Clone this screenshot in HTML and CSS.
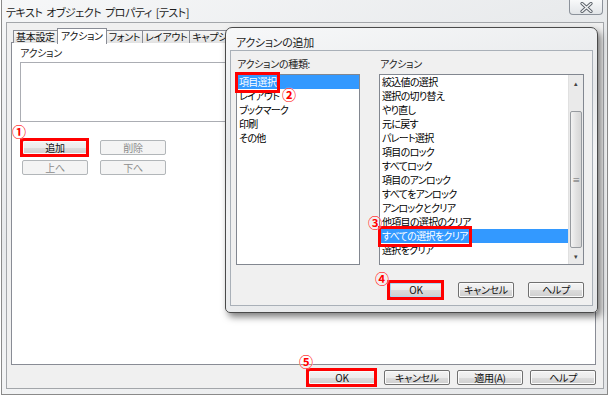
FILE: index.html
```html
<!DOCTYPE html>
<html lang="ja">
<head>
  <meta charset="UTF-8" />
  <title>テキスト オブジェクト プロパティ</title>
  <link rel="stylesheet" href="styles.css">
</head>
<body>

  <div class="window">
    <!-- タイトルバー -->
    <div class="titlebar">
      <span class="title">テキスト オブジェクト プロパティ [テスト]</span>
      <span class="close">
        <svg width="13" height="11" viewBox="0 0 13 11">
          <path d="M2 1.5 L11 9.5 M11 1.5 L2 9.5" stroke="#5a6068" stroke-width="3.2" stroke-linecap="round"/>
          <path d="M2 1.5 L11 9.5 M11 1.5 L2 9.5" stroke="#f4f5f6" stroke-width="1.4" stroke-linecap="round"/>
        </svg>
      </span>
    </div>

    <div class="client">
      <div class="tabs">
        <span class="tab">基本設定</span>
        <span class="tab active">アクション</span>
        <span class="tab">フォント</span>
        <span class="tab">レイアウト</span>
        <span class="tab">キャプション</span>
      </div>

      <div class="panel">
        <div class="label">アクション</div>
        <div class="listbox"></div>
        <div class="btn-grid">
          <button class="btn mark">追加</button>
          <button class="btn" disabled>削除</button>
          <button class="btn" disabled>上へ</button>
          <button class="btn" disabled>下へ</button>
        </div>
      </div>

      <div class="footer">
        <button class="btn mark">OK</button>
        <button class="btn">キャンセル</button>
        <button class="btn">適用(A)</button>
        <button class="btn">ヘルプ</button>
      </div>
    </div>

    <!-- アクションの追加 ダイアログ -->
    <div class="dialog">
      <div class="dlg-title">アクションの追加</div>
      <div class="dlg-client">
        <div class="dlg-cols">
          <div class="col">
            <div class="label">アクションの種類:</div>
            <div class="list kinds">
              <div class="item selected"><span class="mark-text">項目選択</span></div>
              <div class="item">レイアウト</div>
              <div class="item">ブックマーク</div>
              <div class="item">印刷</div>
              <div class="item">その他</div>
            </div>
          </div>
          <div class="col">
            <div class="label">アクション</div>
            <div class="list actions">
              <div class="rows">
                <div class="item">絞込値の選択</div>
                <div class="item">選択の切り替え</div>
                <div class="item">やり直し</div>
                <div class="item">元に戻す</div>
                <div class="item">パレート選択</div>
                <div class="item">項目のロック</div>
                <div class="item">すべてロック</div>
                <div class="item">項目のアンロック</div>
                <div class="item">すべてをアンロック</div>
                <div class="item">アンロックとクリア</div>
                <div class="item">他項目の選択のクリア</div>
                <div class="item selected"><span class="mark-text">すべての選択をクリア</span></div>
                <div class="item">選択をクリア</div>
              </div>
              <div class="scrollbar">
                <span class="arrow">▴</span>
                <span class="thumb"><span class="grip">≡</span></span>
                <span class="arrow">▾</span>
              </div>
            </div>
          </div>
        </div>
        <div class="dlg-buttons">
          <button class="btn default mark">OK</button>
          <button class="btn">キャンセル</button>
          <button class="btn">ヘルプ</button>
        </div>
      </div>
    </div>

    <!-- 手順番号 -->
    <span class="num n1">①</span>
    <span class="num n2">②</span>
    <span class="num n3">③</span>
    <span class="num n4">④</span>
    <span class="num n5">⑤</span>
  </div>

</body>
</html>
```

FILE: styles.css
```css
body {
  margin: 0;
  background: #ffffff;
  font-family: "Noto Sans CJK JP", "Noto Sans", sans-serif;
  font-size: 10px;
  font-feature-settings: "palt";
  letter-spacing: -0.3px;
  color: #000;
}

button {
  font-family: inherit;
  font-size: 10px;
  font-feature-settings: "palt";
  letter-spacing: -0.3px;
  padding: 0;
  margin: 0;
}

.window {
  position: relative;
  width: 605px;
  height: 394px;
  margin-left: 1px;
  border: 1px solid #8a8a8a;
  border-top: none;
  background: linear-gradient(160deg, #f6f7f8 0%, #e7e9eb 40%, #f3f4f5 60%, #e4e6e8 100%);
  display: flex;
  flex-direction: column;
}

.titlebar {
  height: 22px;
  display: flex;
  justify-content: space-between;
  align-items: flex-start;
}

.title {
  font-size: 11px;
  letter-spacing: -0.5px;
  word-spacing: 2px;
  color: #1e1e1e;
  padding: 5px 0 0 4px;
  line-height: 14px;
}

.close {
  width: 34px;
  height: 15px;
  margin-right: 4px;
  border: 1px solid #8c929b;
  border-top: none;
  border-radius: 0 0 4px 4px;
  background: linear-gradient(#f8f9fa, #e2e5e8);
  display: flex;
  justify-content: center;
  align-items: center;
  box-sizing: border-box;
}

.client {
  flex: 1;
  margin: 0 3px 5px 4px;
  border: 1px solid #a3a6aa;
  background: #f0f0f0;
  padding: 5px 7px 0 4px;
  display: flex;
  flex-direction: column;
}

/* タブ */
.tabs {
  display: flex;
  height: 14px;
  padding-left: 3px;
  position: relative;
  z-index: 1;
}

.tab {
  margin-top: 2px;
  height: 12px;
  padding: 0 2px;
  line-height: 12px;
  border: 1px solid #898c95;
  border-bottom: none;
  margin-left: -1px;
  background: linear-gradient(#f6f6f6, #e2e2e2);
  color: #111;
}

.tab.active {
  margin-top: 0;
  height: 15px;
  line-height: 14px;
  background: #ffffff;
  padding: 0 3px;
}

.panel {
  height: 318px;
  background: #ffffff;
  border: 1px solid #898c95;
  padding: 3px 8px 0 8px;
}

.panel .label {
  height: 16px;
  line-height: 14px;
  color: #222;
}

.listbox {
  height: 58px;
  border: 1px solid #abadb3;
  background: #fff;
}

.btn-grid {
  display: grid;
  grid-template-columns: 66px 66px;
  grid-auto-rows: 15px;
  column-gap: 12px;
  row-gap: 5px;
  margin: 18px 0 0 2px;
}

.btn {
  position: relative;
  height: 15px;
  border: 1px solid #707070;
  border-radius: 2px;
  background: linear-gradient(#f3f3f3 0%, #ebebeb 50%, #dcdcdc 51%, #cfcfcf 100%);
  box-shadow: inset 0 0 0 1px #fbfbfb;
  color: #111;
  line-height: 12px;
}

.btn:disabled {
  border-color: #b2b6b9;
  background: #f4f4f4;
  color: #8c8c8c;
  box-shadow: none;
}

.btn.default {
  border-color: #3c7fb1;
  box-shadow: inset 0 0 0 1px #a8d8f4;
}

/* 赤枠 */
.mark::after,
.mark-text::after {
  content: "";
  position: absolute;
  inset: -3px -2px -3px -3px;
  border: 3px solid #ff0000;
  pointer-events: none;
}

.footer {
  display: flex;
  justify-content: flex-end;
  gap: 7px;
  padding: 5px 0 0 0;
}

.footer .btn {
  width: 66px;
}

.footer .btn:first-child {
  width: 68px;
  margin-right: 1px;
}

/* ダイアログ */
.dialog {
  position: absolute;
  z-index: 2;
  left: 223px;
  top: 27px;
  width: 373px;
  height: 286px;
  box-sizing: border-box;
  border: 1px solid #4a4a4a;
  border-radius: 7px 7px 5px 5px;
  background: linear-gradient(170deg, #f7f8f9 0%, #e6e8ea 35%, #f2f3f4 55%, #e3e5e7 100%);
  box-shadow: 3px 4px 7px rgba(0, 0, 0, 0.5);
  padding: 0 4px 6px 4px;
  display: flex;
  flex-direction: column;
}

.dlg-title {
  height: 22px;
  line-height: 28px;
  padding-left: 6px;
  font-size: 11px;
  color: #1e1e1e;
}

.dlg-client {
  flex: 1;
  border: 1px solid #a9b0b8;
  background: #f0f0f0;
  padding: 4px 7px 0 5px;
}

.dlg-cols {
  display: grid;
  grid-template-columns: 124px 205px;
  column-gap: 19px;
}

.dlg-client .label {
  height: 17px;
  line-height: 17px;
  padding-left: 1px;
  margin-bottom: 2px;
  color: #222;
}

.list {
  height: 191px;
  box-sizing: border-box;
  border: 1px solid #828790;
  background: #ffffff;
}

.item {
  height: 14px;
  line-height: 14px;
  padding-left: 2px;
  letter-spacing: -0.7px;
  white-space: nowrap;
}

.item.selected {
  background: #3399ff;
  color: #ffffff;
}

.mark-text {
  position: relative;
  padding-right: 2px;
}

.mark-text::after {
  inset: -2px -2px -4px -4px;
}

.actions {
  display: flex;
}

.actions .rows {
  flex: 1;
}

.scrollbar {
  width: 14px;
  background: #eaeaea;
  border-left: 1px solid #e0e0e0;
  display: flex;
  flex-direction: column;
  align-items: center;
}

.arrow {
  height: 16px;
  font-size: 7px;
  line-height: 16px;
  color: #444;
}

.scrollbar .arrow:first-child {
  margin-bottom: 20px;
}

.thumb {
  width: 12px;
  height: 137px;
  box-sizing: border-box;
  border: 1px solid #969a9f;
  border-radius: 2px;
  background: linear-gradient(90deg, #f3f3f3, #e2e2e2 50%, #d6d6d6);
  display: flex;
  justify-content: center;
  align-items: center;
}

.grip {
  font-size: 8px;
  color: #666;
}

.dlg-buttons {
  display: flex;
  justify-content: flex-end;
  gap: 14px;
  margin-top: 17px;
  padding-right: 1px;
}

.dlg-buttons .btn {
  width: 56px;
  height: 16px;
}

.dlg-buttons .btn:first-child {
  width: 54px;
  margin-right: 1px;
}

/* 手順番号 */
.num {
  position: absolute;
  z-index: 3;
  font-size: 14px;
  font-weight: bold;
  line-height: 14px;
  letter-spacing: 0;
  color: #ff0000;
  text-shadow: 0 0 1px #fff, 0 0 1px #fff;
}

.n1 { left: 10px; top: 124px; }
.n2 { left: 280px; top: 87px; }
.n3 { left: 366px; top: 215px; }
.n4 { left: 373px; top: 271px; }
.n5 { left: 297px; top: 354px; }
```
